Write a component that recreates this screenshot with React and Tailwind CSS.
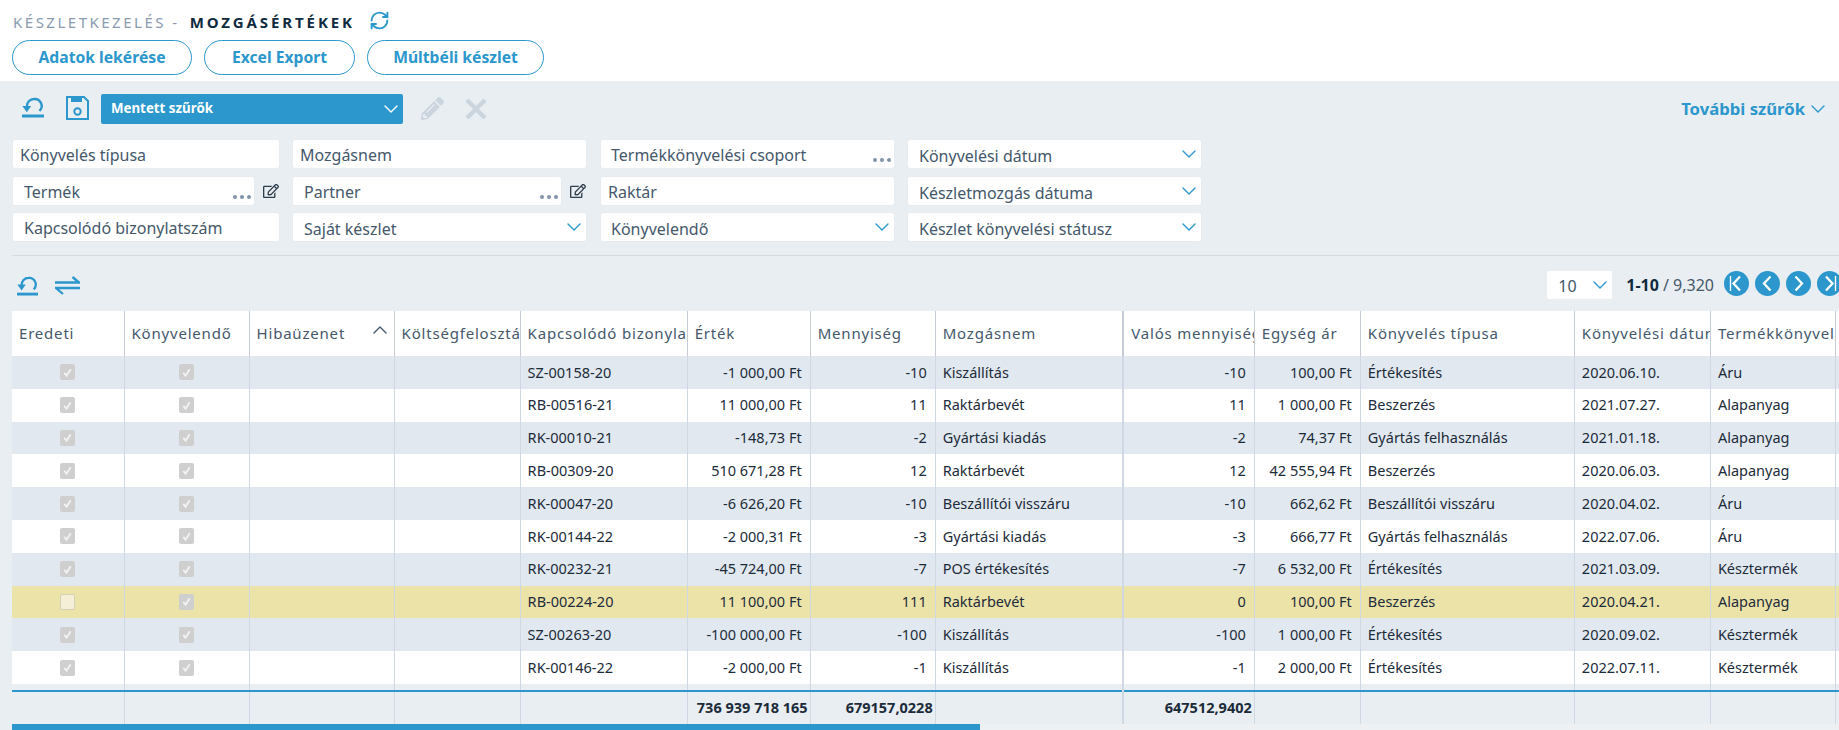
import { ChevronDown, ChevronUp, RefreshCw } from "lucide-react";
import { FaPencilAlt, FaRegEdit } from "react-icons/fa";

const columns = [
  { label: "Eredeti", width: 112 },
  { label: "Könyvelendő", width: 125 },
  { label: "Hibaüzenet", width: 145, sort: true },
  { label: "Költségfelosztás", width: 126 },
  { label: "Kapcsolódó bizonylatszám", width: 167 },
  { label: "Érték", width: 123 },
  { label: "Mennyiség", width: 125 },
  { label: "Mozgásnem", width: 188, thick: true },
  { label: "Valós mennyiség", width: 131 },
  { label: "Egység ár", width: 106 },
  { label: "Könyvelés típusa", width: 214 },
  { label: "Könyvelési dátum", width: 136 },
  { label: "Termékkönyvelési csoport", width: 125 },
  { label: "", width: 120 },
];

const rows = [
  ["SZ-00158-20", "-1 000,00 Ft", "-10", "Kiszállítás", "-10", "100,00 Ft", "Értékesítés", "2020.06.10.", "Áru"],
  ["RB-00516-21", "11 000,00 Ft", "11", "Raktárbevét", "11", "1 000,00 Ft", "Beszerzés", "2021.07.27.", "Alapanyag"],
  ["RK-00010-21", "-148,73 Ft", "-2", "Gyártási kiadás", "-2", "74,37 Ft", "Gyártás felhasználás", "2021.01.18.", "Alapanyag"],
  ["RB-00309-20", "510 671,28 Ft", "12", "Raktárbevét", "12", "42 555,94 Ft", "Beszerzés", "2020.06.03.", "Alapanyag"],
  ["RK-00047-20", "-6 626,20 Ft", "-10", "Beszállítói visszáru", "-10", "662,62 Ft", "Beszállítói visszáru", "2020.04.02.", "Áru"],
  ["RK-00144-22", "-2 000,31 Ft", "-3", "Gyártási kiadás", "-3", "666,77 Ft", "Gyártás felhasználás", "2022.07.06.", "Áru"],
  ["RK-00232-21", "-45 724,00 Ft", "-7", "POS értékesítés", "-7", "6 532,00 Ft", "Értékesítés", "2021.03.09.", "Késztermék"],
  ["RB-00224-20", "11 100,00 Ft", "111", "Raktárbevét", "0", "100,00 Ft", "Beszerzés", "2020.04.21.", "Alapanyag", "highlight"],
  ["SZ-00263-20", "-100 000,00 Ft", "-100", "Kiszállítás", "-100", "1 000,00 Ft", "Értékesítés", "2020.09.02.", "Késztermék"],
  ["RK-00146-22", "-2 000,00 Ft", "-1", "Kiszállítás", "-1", "2 000,00 Ft", "Értékesítés", "2022.07.11.", "Késztermék"],
];

function ResetIcon({ className }) {
  return (
    <svg viewBox="0 0 22 21" className={className} fill="none" stroke="#2b97cc" strokeWidth="2.4">
      <path d="M5 9.5 A7 7 0 0 1 12 2 A7 7 0 0 1 17.5 14" />
      <path d="M0.4 9 L9.2 9 L4.8 15.2 Z" fill="#2b97cc" stroke="none" />
      <path d="M0 19 H22" strokeWidth="3" />
    </svg>
  );
}

function SaveIcon({ className }) {
  return (
    <svg viewBox="0 0 23 24" className={className} fill="none" stroke="#2b97cc" strokeWidth="2">
      <path d="M1 1 H18 L22 5 V23 H1 Z" />
      <rect x="5" y="1" width="11" height="5" fill="#2b97cc" stroke="none" />
      <circle cx="11.5" cy="15.5" r="3.2" />
    </svg>
  );
}

function SwapIcon({ className }) {
  return (
    <svg viewBox="0 0 25 19" className={className} fill="none" stroke="#2b97cc" strokeWidth="2.3">
      <path d="M0 6.5 H24 L17.5 1" />
      <path d="M25 12 H1 L8 18" />
    </svg>
  );
}

function PageIcon({ d, bar }) {
  return (
    <svg viewBox="0 0 25 25" className="w-[25px] h-[25px]" fill="none" stroke="#fff" strokeWidth="2.3">
      <path d={d} />
      {bar && <path d={bar} strokeWidth="1.4" />}
    </svg>
  );
}

function Field({ label, dots, chevron, className = "", pad = "pl-[7px]" }) {
  return (
    <div className={`relative h-7 bg-white rounded-[2px] shadow-[0_0_1px_#d5dde5] flex items-center ${pad} ${chevron ? "pt-[3px]" : "pt-[2px]"} text-[16px] text-[#45586b] ${className}`}>
      {label}
      {dots && <span className="absolute right-[3px] bottom-[6px] w-[18px] flex justify-between">
        <i className="w-1 h-1 rounded-full bg-[#7f93a8]" />
        <i className="w-1 h-1 rounded-full bg-[#7f93a8]" />
        <i className="w-1 h-1 rounded-full bg-[#7f93a8]" />
      </span>}
      {chevron && <ChevronDown className="absolute right-0 top-[2px] w-6 h-6 text-[#2b97cc]" strokeWidth={1.4} />}
    </div>
  );
}

function RowCheck({ checked }) {
  return (
    <span className={`mx-auto flex w-[15px] h-4 items-center justify-center rounded-[2px] ${checked ? "bg-[#cfcfcf]" : "bg-[#f4efd6] border border-[#d5d0b8]"}`}>
      {checked && (
        <svg viewBox="0 0 12 12" className="w-[11px] h-[11px]" fill="none" stroke="#f3f3f3" strokeWidth="2">
          <path d="M2.5 6.5 L5 9.5 L9.5 2.5" />
        </svg>
      )}
    </span>
  );
}

function PageBtn({ children }) {
  return (
    <span className="w-[25px] h-[25px] shrink-0 rounded-full bg-[#2b97cc] flex items-center justify-center">
      {children}
    </span>
  );
}

export default function App() {
  return (
    <div className="w-[1839px] h-[730px] overflow-hidden bg-white font-['Noto_Sans',sans-serif]">
      {/* Header */}
      <div className="h-[81px] pl-3">
        <div className="h-10 flex items-center pt-1">
          <span className="text-[15px] tracking-[2.5px] text-[#8a9bb0] pl-px">KÉSZLETKEZELÉS -</span>
          <span className="ml-[10px] text-[15px] font-bold tracking-[2.9px] text-[#0f2a40]">MOZGÁSÉRTÉKEK</span>
          <RefreshCw className="ml-[14px] -mt-1 w-[21px] h-[21px] text-[#2b97cc]" strokeWidth={2.2} />
        </div>
        <div className="flex gap-3">
          <button className="w-[180px] h-[35px] rounded-full border border-[#2b97cc] text-[#2b97cc] font-bold text-[15.7px]">Adatok lekérése</button>
          <button className="w-[151px] h-[35px] rounded-full border border-[#2b97cc] text-[#2b97cc] font-bold text-[15.7px]">Excel Export</button>
          <button className="w-[177px] h-[35px] rounded-full border border-[#2b97cc] text-[#2b97cc] font-bold text-[15.7px]">Múltbéli készlet</button>
        </div>
      </div>

      <div className="h-[649px] bg-[#e9eef2]">
        {/* Filter toolbar */}
        <div className="h-[59px] flex items-start pt-[13px]">
          <ResetIcon className="ml-[22px] w-[22px] h-[21px] mt-[3px]" />
          <SaveIcon className="ml-[22px] w-[23px] h-6 mt-[2px]" />
          <div className="ml-3 w-[302px] h-[30px] bg-[#2b97cc] rounded-[2px] flex items-center justify-between pl-[10px] text-white text-[13.3px] font-bold">
            Mentett szűrők
            <ChevronDown className="w-6 h-6" strokeWidth={1.4} />
          </div>
          <FaPencilAlt className="ml-[18px] mt-[3px] w-[23px] h-[23px] text-[#ccd5dd]" />
          <svg viewBox="0 0 22 22" className="ml-[21px] mt-1 w-[22px] h-[22px]" fill="none" stroke="#ccd5dd" strokeWidth="4.4">
            <path d="M2 2 L20 20 M20 2 L2 20" />
          </svg>
          <div className="ml-auto pr-[9px] flex items-center h-[30px] text-[#2b97cc] font-bold text-[16.7px]">
            További szűrők
            <ChevronDown className="ml-px w-6 h-6" strokeWidth={1.4} />
          </div>
        </div>

        {/* Filters */}
        <div className="pl-[13px] flex gap-[14px]">
          <div className="w-[266px] flex flex-col gap-2 shrink-0">
            <Field label="Könyvelés típusa" />
            <div className="mt-px flex items-center justify-between">
              <Field label="Termék" dots className="w-[241px]" pad="pl-[11px]" />
              <FaRegEdit className="w-[16px] h-[16px] text-[#2f3e4c]" />
            </div>
            <Field label="Kapcsolódó bizonylatszám" pad="pl-[11px]" />
          </div>
          <div className="w-[293px] flex flex-col gap-2 shrink-0">
            <Field label="Mozgásnem" />
            <div className="mt-px flex items-center justify-between">
              <Field label="Partner" dots className="w-[268px]" pad="pl-[11px]" />
              <FaRegEdit className="w-[16px] h-[16px] text-[#2f3e4c]" />
            </div>
            <Field label="Saját készlet" chevron pad="pl-[11px]" />
          </div>
          <div className="ml-px w-[293px] flex flex-col gap-2 shrink-0">
            <Field label="Termékkönyvelési csoport" dots pad="pl-[10px]" />
            <Field label="Raktár" className="mt-px" />
            <Field label="Könyvelendő" chevron pad="pl-[10px]" />
          </div>
          <div className="w-[293px] flex flex-col gap-2 shrink-0">
            <Field label="Könyvelési dátum" chevron pad="pl-[11px]" />
            <Field label="Készletmozgás dátuma" chevron pad="pl-[11px]" className="mt-px" />
            <Field label="Készlet könyvelési státusz" chevron pad="pl-[11px]" />
          </div>
        </div>

        <div className="ml-3 mt-[14px] border-t border-[#d3dae0]" />

        {/* Grid toolbar */}
        <div className="h-[55px] pl-[17px] flex items-start pt-[15px]">
          <ResetIcon className="w-[21px] h-5 mt-[5px]" />
          <SwapIcon className="ml-[17px] w-[25px] h-[19px] mt-[5px]" />
          <div className="ml-auto flex items-center">
            <div className="relative w-[65px] h-7 bg-white rounded-[2px] flex items-center pl-[11px] pt-[2px] text-[16px] text-[#45586b]">
              10
              <ChevronDown className="absolute right-0 top-[2px] w-6 h-6 text-[#2b97cc]" strokeWidth={1.4} />
            </div>
            <div className="ml-[14px] text-[16px] text-[#45586b] whitespace-nowrap">
              <b className="text-[#0f2a40]">1-10</b> / 9,320
            </div>
            <div className="ml-[10px] -mr-[3px] flex gap-[6px] -mt-[3px]">
              <PageBtn><PageIcon d="M16 5.5 L9.5 12.5 L16 19.5" bar="M6.5 5 V20" /></PageBtn>
              <PageBtn><PageIcon d="M15.5 5.5 L9 12.5 L15.5 19.5" /></PageBtn>
              <PageBtn><PageIcon d="M9.5 5.5 L16 12.5 L9.5 19.5" /></PageBtn>
              <PageBtn><PageIcon d="M9 5.5 L15.5 12.5 L9 19.5" bar="M18.5 5 V20" /></PageBtn>
            </div>
          </div>
        </div>

        {/* Grid */}
        <div className="ml-3 overflow-hidden">
          <table className="table-fixed border-collapse w-[1944px] text-[14.5px] text-[#1c2b3a]">
            <colgroup>
              {columns.map((c, i) => <col key={i} style={{ width: c.width }} />)}
            </colgroup>
            <thead>
              <tr className="h-[45px] bg-white">
                {columns.map((c, i) => (
                  <th key={i} className={`relative font-normal text-left pl-[7px] text-[15px] tracking-[0.8px] text-[#45586b] whitespace-nowrap overflow-hidden border-r border-[#c5ccd6] ${c.thick ? "border-r-2" : ""}`}>
                    {c.label}
                    {c.sort && <ChevronUp className="absolute right-[2px] top-[7px] w-6 h-6 text-[#45586b]" strokeWidth={1.4} />}
                  </th>
                ))}
              </tr>
            </thead>
            <tbody>
              {rows.map((r, i) => {
                const highlight = r[9] === "highlight";
                return (
                  <tr key={i} className={`h-[32.8px] ${highlight ? "bg-[#ece3a9]" : i % 2 === 0 ? "bg-[#e1e8ef]" : "bg-white"}`}>
                    <td className="border-r border-[#cfd8e3]"><RowCheck checked={!highlight} /></td>
                    <td className="border-r border-[#cfd8e3]"><RowCheck checked /></td>
                    <td className="border-r border-[#cfd8e3]" />
                    <td className="border-r border-[#cfd8e3]" />
                    <td className="border-r border-[#cfd8e3] pl-[7px] whitespace-nowrap">{r[0]}</td>
                    <td className="border-r border-[#cfd8e3] pr-2 text-right whitespace-nowrap">{r[1]}</td>
                    <td className="border-r border-[#cfd8e3] pr-2 text-right whitespace-nowrap">{r[2]}</td>
                    <td className="border-r-2 border-[#cfd8e3] pl-[7px] whitespace-nowrap">{r[3]}</td>
                    <td className="border-r border-[#cfd8e3] pr-2 text-right whitespace-nowrap">{r[4]}</td>
                    <td className="border-r border-[#cfd8e3] pr-2 text-right whitespace-nowrap">{r[5]}</td>
                    <td className="border-r border-[#cfd8e3] pl-[7px] whitespace-nowrap">{r[6]}</td>
                    <td className="border-r border-[#cfd8e3] pl-[7px] whitespace-nowrap">{r[7]}</td>
                    <td className="border-r border-[#cfd8e3] pl-[7px] whitespace-nowrap">{r[8]}</td>
                    <td />
                  </tr>
                );
              })}
              <tr className="h-[7px] bg-[#e9eef2]">
                {columns.map((c, i) => <td key={i} className={`border-r border-[#cfd8e3] ${c.thick ? "border-r-2" : ""}`} />)}
              </tr>
            </tbody>
            <tfoot>
              <tr className="h-[33px] bg-[#e9eef2] border-t-2 border-[#2b97cc] font-bold">
                {columns.map((c, i) => (
                  <td key={i} className={`border-r border-[#cfd8e3] pr-[2px] text-right whitespace-nowrap ${c.thick ? "border-r-2" : ""}`}>
                    {i === 5 ? "736 939 718 165" : i === 6 ? "679157,0228" : i === 8 ? "647512,9402" : ""}
                  </td>
                ))}
              </tr>
            </tfoot>
          </table>
          <div className="h-[6px] bg-[#edf1f4]">
            <div className="w-[968px] h-[6px] bg-[#2b97cc]" />
          </div>
        </div>
      </div>
    </div>
  );
}
